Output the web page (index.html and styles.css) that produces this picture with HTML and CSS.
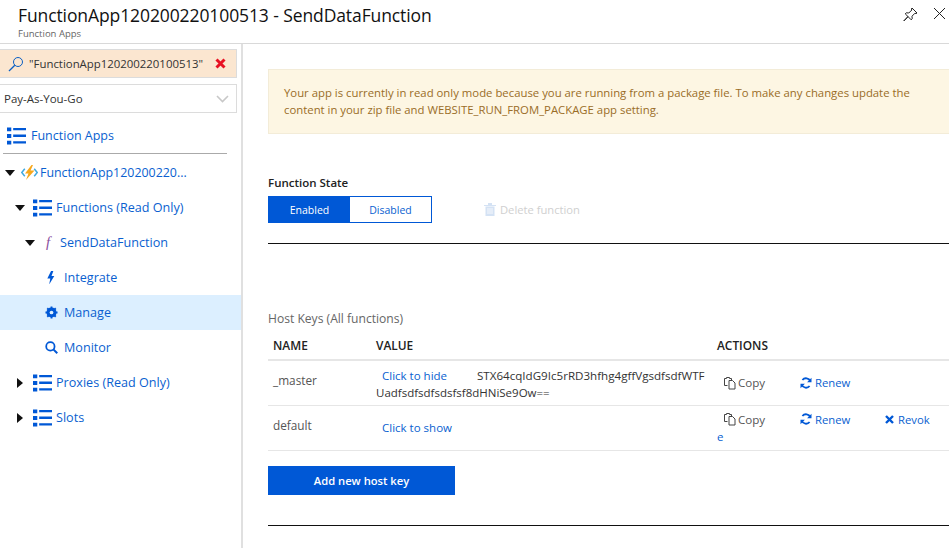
FILE: index.html
```html
<!DOCTYPE html>
<html lang="en">
<head>
<meta charset="utf-8">
<title>SendDataFunction</title>
<link rel="stylesheet" href="styles.css">
</head>
<body>
<svg class="defs" width="0" height="0" aria-hidden="true">
  <symbol id="list" viewBox="0 0 20 18">
    <path d="M0 0h4.500v4H0zM0 7h4.500v4H0zM0 14h4.500v4H0zM6.500 .5H20v2.500H6.500zM6.500 7.500H20V10H6.500zM6.500 14.500H20V17H6.500z" fill="#0058d6"/>
  </symbol>
  <symbol id="down" viewBox="0 0 10 6"><path d="M0 0h10L5 6z" fill="#111"/></symbol>
  <symbol id="right" viewBox="0 0 6 10"><path d="M0 0v10l6-5z" fill="#111"/></symbol>
  <symbol id="copy" viewBox="0 0 14 14">
    <path d="M4.500 9.500H1.500V2.500h2V1.500h3v1h2v2M6 4.500h3.500l2.500 2.500v6H6z" fill="none" stroke="#444" stroke-width="1"/>
  </symbol>
  <symbol id="renew" viewBox="0 0 12 12">
    <path d="M10.300 4.200A4.600 4.600 0 0 0 2.400 3" fill="none" stroke="#0058d6" stroke-width="1.800"/>
    <path d="M1.700 7.800A4.600 4.600 0 0 0 9.600 9" fill="none" stroke="#0058d6" stroke-width="1.800"/>
    <path d="M11.500 .8v4.400H7.100zM.5 11.200V6.800h4.400z" fill="#0058d6"/>
  </symbol>
</svg>
<header class="top">
  <div class="titles">
    <h1 class="title">FunctionApp120200220100513 - SendDataFunction</h1>
    <div class="subtitle">Function Apps</div>
  </div>
  <div class="win-icons">
    <svg class="pin" width="15" height="15" viewBox="0 0 15 15"><path d="M9 1l5 5-1 .6-1-.4-3 3 .2 2.600-1 1L5 9.600 1.200 13.800 1 14l-.2-.2L5 9.600 2.200 6.800l1-1 2.600.2 3-3-.4-1z" fill="none" stroke="#222" stroke-width="1"/></svg>
    <svg class="close" width="13" height="13" viewBox="0 0 13 13"><path d="M1 1l11 11M12 1L1 12" stroke="#222" stroke-width="1" fill="none"/></svg>
  </div>
</header>
<div class="body-row">
  <aside class="side">
    <div class="search">
      <svg class="lens" width="16" height="16" viewBox="0 0 16 16"><circle cx="10" cy="6" r="4.500" fill="none" stroke="#0a5fc4" stroke-width="1"/><path d="M6.800 9.200L1 15" stroke="#0a5fc4" stroke-width="1.300"/></svg>
      <span class="search-text">"FunctionApp120200220100513"</span>
      <svg class="search-x" width="11" height="11" viewBox="0 0 11 11"><path d="M1.500 1.500l8 8M9.500 1.500l-8 8" stroke="#e81123" stroke-width="3"/></svg>
    </div>
    <div class="select">
      <span>Pay-As-You-Go</span>
      <svg width="13" height="8" viewBox="0 0 13 8"><path d="M1 1l5.500 5.500L12 1" fill="none" stroke="#c8c8c8" stroke-width="1.600"/></svg>
    </div>
    <div class="apps-head">
      <svg class="ico-list"><use href="#list"/></svg>
      <span>Function Apps</span>
    </div>
    <nav class="tree">
      <div class="node lv0">
        <svg class="tri-d"><use href="#down"/></svg>
        <svg class="bolt-app" width="17" height="15" viewBox="0 0 17 15">
          <path d="M3.800 3.800L.8 7.500l3 3.700M13.200 3.800l3 3.700-3 3.700" fill="none" stroke="#3fa9e0" stroke-width="1.500"/>
          <path d="M10.500 0L4 8.500h3.500L5 15l8.500-9.500H9.500L12 0z" fill="#f7a81b"/>
        </svg>
        <span>FunctionApp120200220...</span>
      </div>
      <div class="node lv1">
        <svg class="tri-d"><use href="#down"/></svg>
        <svg class="ico-list"><use href="#list"/></svg>
        <span>Functions (Read Only)</span>
      </div>
      <div class="node lv2">
        <svg class="tri-d"><use href="#down"/></svg>
        <span class="fx">f</span>
        <span>SendDataFunction</span>
      </div>
      <div class="node lv3">
        <svg class="ico-sm" viewBox="0 0 14 14"><path d="M6.500 0L2.500 8h3.200L4.500 14.500 10 5.500H7L9 0z" fill="#0058d6"/></svg>
        <span>Integrate</span>
      </div>
      <div class="node lv3 active">
        <svg class="ico-sm" viewBox="0 0 14 14"><circle cx="7" cy="7" r="3.900" fill="none" stroke="#0058d6" stroke-width="3"/><path d="M7 .5v13M.5 7h13M2.400 2.400l9.200 9.200M11.600 2.400l-9.200 9.200" stroke="#0058d6" stroke-width="2"/><circle cx="7" cy="7" r="2" fill="#dcefff"/></svg>
        <span>Manage</span>
      </div>
      <div class="node lv3">
        <svg class="ico-sm" viewBox="0 0 14 14"><circle cx="5.800" cy="5.800" r="4.500" fill="none" stroke="#0058d6" stroke-width="1.900"/><path d="M9 9l4.200 4.200" stroke="#0058d6" stroke-width="2.200"/></svg>
        <span>Monitor</span>
      </div>
      <div class="node lv1">
        <svg class="tri-r"><use href="#right"/></svg>
        <svg class="ico-list"><use href="#list"/></svg>
        <span>Proxies (Read Only)</span>
      </div>
      <div class="node lv1">
        <svg class="tri-r"><use href="#right"/></svg>
        <svg class="ico-list"><use href="#list"/></svg>
        <span>Slots</span>
      </div>
    </nav>
  </aside>
  <main class="content">
    <div class="notice">Your app is currently in read only mode because you are running from a package file. To make any changes update the content in your zip file and WEBSITE_RUN_FROM_PACKAGE app setting.</div>
    <div class="state-label">Function State</div>
    <div class="state-row">
      <div class="toggle"><span class="on">Enabled</span><span class="off">Disabled</span></div>
      <div class="delete">
        <svg width="12" height="13" viewBox="0 0 12 13"><path d="M0 2h12v1H0zM4 0h4v2H4zM1.500 3.500h9V13h-9z" fill="#d4e2f4"/><path d="M4 5v6M6 5v6M8 5v6" stroke="#fff" stroke-width=".8"/></svg>
        <span>Delete function</span>
      </div>
    </div>
    <hr class="rule rule-a">
    <div class="keys-title">Host Keys (All functions)</div>
    <table class="keys">
      <thead>
        <tr><th class="c-name">NAME</th><th class="c-value">VALUE</th><th class="c-act">ACTIONS</th></tr>
      </thead>
      <tbody>
        <tr>
          <td class="c-name"><div class="name-cell">_master</div></td>
          <td class="c-value two-line">
            <div class="val-line"><a class="link hide">Click to hide</a><span class="secret">STX64cqIdG9Ic5rRD3hfhg4gffVgsdfsdfWTF</span></div>
            <div class="secret-2">Uadfsdfsdfsdsfsf8dHNiSe9Ow==</div>
          </td>
          <td class="c-act">
            <div class="acts">
              <span class="act copy"><svg width="14" height="14"><use href="#copy"/></svg>Copy</span>
              <span class="act renew"><svg width="12" height="12"><use href="#renew"/></svg>Renew</span>
            </div>
          </td>
        </tr>
        <tr>
          <td class="c-name"><div class="name-cell">default</div></td>
          <td class="c-value"><div class="val-line"><a class="link hide">Click to show</a></div></td>
          <td class="c-act">
            <div class="acts">
              <span class="act copy"><svg width="14" height="14"><use href="#copy"/></svg>Copy</span>
              <span class="act renew"><svg width="12" height="12"><use href="#renew"/></svg>Renew</span>
              <span class="act revoke"><svg width="9" height="9" viewBox="0 0 9 9"><path d="M1 1l7 7M8 1L1 8" stroke="#0058d6" stroke-width="2.400"/></svg>Revok</span>
            </div>
            <div class="wrap-e">e</div>
          </td>
        </tr>
      </tbody>
    </table>
    <button class="add-key" type="button">Add new host key</button>
    <hr class="rule rule-b">
  </main>
</div>
</body>
</html>
```

FILE: styles.css
```css
* { box-sizing: border-box; }
html, body { margin: 0; height: 100%; overflow: hidden; }
body {
  width: 949px;
  height: 548px;
  font-family: "Open Sans", "Noto Sans", sans-serif;
  font-size: 12px;
  color: #222;
  background: #fff;
}
.defs { position: absolute; }

.top {
  height: 44px;
  border-bottom: 1px solid #d9d9d9;
  display: flex;
  justify-content: space-between;
  padding: 0 0 0 18px;
}
.title {
  margin: 3px 0 0;
  font-size: 17.500px;
  line-height: 24px;
  font-weight: 400;
  color: #111;
  letter-spacing: -.1px;
}
.subtitle { font-size: 9.500px; line-height: 13px; color: #666; }
.win-icons { display: flex; gap: 15px; padding: 7px 3px 0 0; align-items: flex-start; }

.body-row { display: flex; height: 504px; }
.side {
  width: 243px;
  flex: none;
  border-right: 2px solid #e0e0e0;
  padding-top: 5px;
}
.search {
  width: 237px;
  height: 29px;
  background: #fbe6d0;
  border: 1px solid #dcdcdc;
  border-left: 0;
  display: flex;
  align-items: center;
  padding-left: 8px;
}
.search-text { margin-left: 5px; font-size: 11.400px; color: #333; white-space: nowrap; width: 184px; }
.search-x { margin-left: 2px; }
.select {
  width: 237px;
  height: 29px;
  margin-top: 6px;
  border: 1px solid #dcdcdc;
  border-left: 0;
  display: flex;
  align-items: center;
  justify-content: space-between;
  padding: 0 7px 0 4px;
  font-size: 11.500px;
  color: #333;
}
.apps-head {
  height: 41px;
  width: 224px;
  margin-left: 3px;
  border-bottom: 1px solid #aaa;
  display: flex;
  align-items: center;
  padding: 5px 0 0 4px;
  color: #0a5fd0;
  font-size: 12.500px;
}
.ico-list { width: 19px; height: 18px; flex: none; margin-right: 5px; }
.tree { color: #0a5fd0; font-size: 12.600px; }
.tree .ico-list { margin-right: 4px; }
.node { height: 35px; display: flex; align-items: center; white-space: nowrap; }
.lv0 { padding-left: 5px; margin-top: 1px; font-size: 12.400px; }
.lv1 { padding-left: 15px; }
.lv2 { padding-left: 25px; }
.lv3 { padding-left: 45px; }
.tri-d { width: 10px; height: 6px; flex: none; margin-right: 6px; }
.lv1 .tri-d { margin-right: 8px; }
.tri-r { width: 6px; height: 10px; flex: none; margin: 0 10px 0 2px; }
.bolt-app { margin-right: 2px; flex: none; }
.fx { font-family: "Liberation Serif", serif; font-style: italic; color: #8a4f9e; font-size: 15px; width: 19px; padding-left: 5px; }
.ico-sm { width: 13px; height: 13px; flex: none; margin-right: 6px; }
.active { background: #dcefff; }

.content { flex: 1; padding: 25px 0 0 25px; min-width: 0; overflow: hidden; }
.notice {
  width: 700px;
  height: 65px;
  background: #fdf6e3;
  border: 1px solid #f3ecd8;
  color: #9a6d27;
  font-size: 11.350px;
  line-height: 17px;
  padding: 14px 20px 0 15px;
}
.state-label { margin-top: 41px; font-size: 11.500px; line-height: 16px; font-weight: 600; color: #222; }
.state-row { display: flex; align-items: center; margin-top: 5px; }
.toggle { display: flex; width: 164px; height: 27px; border: 1px solid #0058d6; font-size: 10.500px; }
.toggle span { display: flex; align-items: center; justify-content: center; }
.on { width: 81px; background: #0058d6; color: #fff; }
.off { flex: 1; color: #0a5fd0; }
.delete { display: flex; align-items: center; gap: 4px; margin-left: 52px; color: #d0d0d0; font-size: 11.200px; }
.rule { border: 0; height: 1px; background: #111; margin: 0; width: 700px; }
.rule-a { margin-top: 20px; }
.keys-title { margin-top: 67px; font-size: 12.100px; line-height: 16px; color: #666; }
.keys { width: 681px; border-collapse: collapse; margin-top: 4px; table-layout: fixed; font-size: 11.500px; }
.keys th {
  height: 29px;
  text-align: left;
  font-weight: 600;
  font-size: 11.900px;
  padding: 0 0 0 5px;
  border-bottom: 2px solid #e6e6e6;
  color: #222;
}
.keys td { height: 45px; padding: 0; vertical-align: middle; border-bottom: 1px solid #e6e6e6; }
.keys td.two-line { padding-top: 2px; }
.c-name { width: 103px; }
.c-value { width: 341px; }
.name-cell { padding: 0 0 6px 5px; color: #555; font-size: 11.800px; line-height: 16px; }
.val-line { display: flex; padding-left: 11px; line-height: 17px; white-space: nowrap; }
.link { color: #0a5fd0; }
.hide { width: 95px; flex: none; }
.secret { color: #333; font-size: 11.600px; }
.secret-2 { padding-left: 5px; line-height: 17px; color: #333; font-size: 11.500px; }
.acts { display: flex; padding-left: 11px; line-height: 17px; font-size: 11.300px; }
.act { display: flex; align-items: center; gap: 1px; flex: none; white-space: nowrap; }
.copy { width: 77px; color: #555; font-size: 11.600px; }
.renew { width: 85px; color: #0a5fd0; gap: 3px; }
.revoke { color: #0a5fd0; gap: 4px; }
.wrap-e { color: #0a5fd0; padding-left: 5px; line-height: 17px; }
.add-key {
  display: block;
  width: 187px;
  height: 29px;
  margin-top: 15px;
  border: 0;
  background: #0058d6;
  color: #fff;
  font-family: inherit;
  font-size: 11.200px;
  font-weight: 600;
}
.rule-b { margin-top: 30px; }
```
